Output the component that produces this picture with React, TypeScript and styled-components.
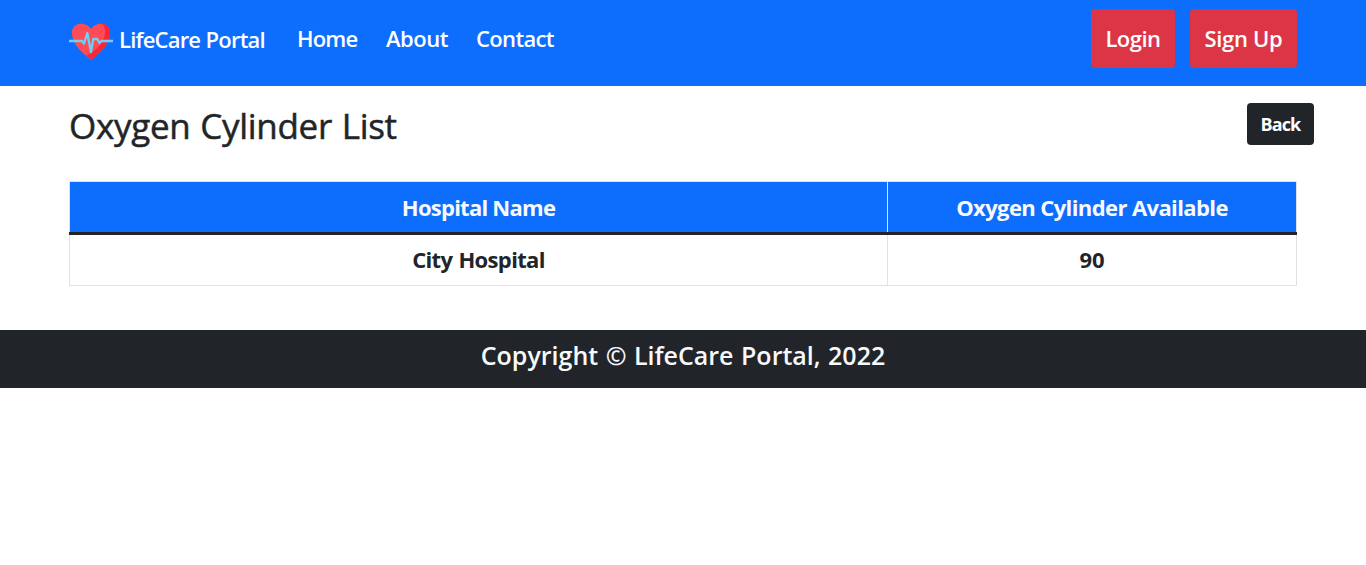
import React from 'react';
import styled, { createGlobalStyle } from 'styled-components';

const GlobalStyle = createGlobalStyle`
  *, *::before, *::after { box-sizing: border-box; }
  body {
    margin: 0;
    background: #fff;
    color: #212529;
    font-family: "Segoe UI", "Open Sans", "Noto Sans", sans-serif;
    font-size: 22px;
    line-height: 34px;
  }
`;

const Navbar = styled.nav`
  display: flex;
  align-items: flex-start;
  height: 86px;
  padding: 9px 69px 0;
  background: #0d6efd;
  color: #fff;
  font-weight: 600;
`;

const Brand = styled.a`
  display: flex;
  align-items: flex-start;
  width: 228px;
  height: 63px;
  padding-top: 10px;
  line-height: 41px;
  white-space: nowrap;
`;

const Logo = styled.svg`
  flex: none;
  width: 44px;
  height: 44px;
  margin-right: 6px;
`;

const Label = styled.span<{ $spacing?: number; $wordGap?: number }>`
  letter-spacing: ${({ $spacing = 0 }) => $spacing}px;
  word-spacing: ${({ $wordGap = 0 }) => $wordGap}px;
  white-space: nowrap;
`;

const NavLink = styled.a<{ $width: number }>`
  width: ${({ $width }) => $width}px;
  line-height: 59px;
`;

const Actions = styled.div`
  display: flex;
  gap: 15px;
  margin-left: auto;
`;

const ActionButton = styled.button<{ $width: number }>`
  width: ${({ $width }) => $width}px;
  height: 59px;
  padding: 0 0 2px;
  border: 0;
  border-radius: 4px;
  background: #dc3545;
  color: #fff;
  font: inherit;
`;

const Header = styled.header`
  display: flex;
  justify-content: space-between;
  height: 95px;
  padding: 17px 52px 0 69px;
`;

const Title = styled.h1`
  margin: 0;
  font-size: 35px;
  font-weight: 500;
  line-height: 46px;
  -webkit-text-stroke: 0.5px currentColor;
`;

const BackButton = styled.button`
  width: 67px;
  height: 42px;
  padding: 0 0 1px;
  border: 0;
  border-radius: 4px;
  background: #212529;
  color: #fff;
  font: inherit;
  font-size: 18px;
  font-weight: 700;
`;

const Table = styled.table`
  width: 1228px;
  height: 105px;
  margin: 0 69px 44px;
  border-collapse: separate;
  border-spacing: 0;
  border-top: 1px solid #dee2e6;
  border-left: 1px solid #dee2e6;
  table-layout: fixed;
  text-align: center;
  font-weight: 700;
`;

const Cell = styled.td`
  height: 51px;
  padding: 0 0 2px;
  border-right: 1px solid #dee2e6;
  border-bottom: 1px solid #dee2e6;
`;

const HeadCell = styled.th<{ $width: number }>`
  width: ${({ $width }) => $width}px;
  height: 50px;
  padding: 0;
  border-right: 1px solid #dee2e6;
  background: #0d6efd;
  color: #f8f9fa;
`;

const Divider = styled.td`
  height: 3px;
  padding: 0;
  background: #212529;
  box-shadow: -1px 0 #212529;
`;

const Footer = styled.footer`
  height: 58px;
  background: #212529;
  color: #f8f9fa;
  font-size: 25px;
  font-weight: 600;
  line-height: 50px;
  text-align: center;
`;

const HeartLogo = () => (
  <Logo viewBox="0 0 44 44" fill="none">
    <path d="M22 41C18 37 4 28 3 15C2.500 8 7 4.700 12 4.700C17 4.700 20 7 22 10C24 7 27 4.700 32 4.700C37 4.700 41.500 8 41 15C40 28 26 37 22 41Z" fill="#ff4b55" />
    <path d="M33 4.700C38 4.700 41.500 8 41 15C40 28 26 37 22 41C20.500 39.500 19 38 17.500 36.700C27 32 35 24 36 14C36.300 10 35 6.500 33 4.700Z" fill="#f92735" />
    <path d="M0 22H13L15 24.500L18.300 14L22 33L24.300 20H28.300L30.500 24L32.500 22H44" stroke="#6ed0f7" strokeWidth="2.300" strokeLinejoin="round" />
  </Logo>
);

export default function App() {
  return (
    <>
      <GlobalStyle />
      <Navbar>
        <Brand>
          <HeartLogo />
          <Label $spacing={-0.8} $wordGap={0.5}>LifeCare Portal</Label>
        </Brand>
        <NavLink $width={89}><Label $spacing={-0.8}>Home</Label></NavLink>
        <NavLink $width={90}><Label $spacing={-0.45}>About</Label></NavLink>
        <NavLink $width={90}><Label $spacing={-0.65}>Contact</Label></NavLink>
        <Actions>
          <ActionButton $width={84}><Label $spacing={-0.5}>Login</Label></ActionButton>
          <ActionButton $width={107}><Label $spacing={-0.3}>Sign Up</Label></ActionButton>
        </Actions>
      </Navbar>
      <main>
        <Header>
          <Title><Label $spacing={-0.3} $wordGap={1}>Oxygen Cylinder List</Label></Title>
          <BackButton><Label $spacing={-0.9}>Back</Label></BackButton>
        </Header>
        <Table>
          <thead>
            <tr>
              <HeadCell $width={818}><Label $spacing={-0.75}>Hospital Name</Label></HeadCell>
              <HeadCell $width={409}><Label $spacing={-0.6}>Oxygen Cylinder Available</Label></HeadCell>
            </tr>
            <tr><Divider colSpan={2} /></tr>
          </thead>
          <tbody>
            <tr>
              <Cell><Label $spacing={-0.65} $wordGap={1}>City Hospital</Label></Cell>
              <Cell><Label>90</Label></Cell>
            </tr>
          </tbody>
        </Table>
      </main>
      <Footer><Label $spacing={0} $wordGap={1}>Copyright © LifeCare Portal, 2022</Label></Footer>
    </>
  );
}
